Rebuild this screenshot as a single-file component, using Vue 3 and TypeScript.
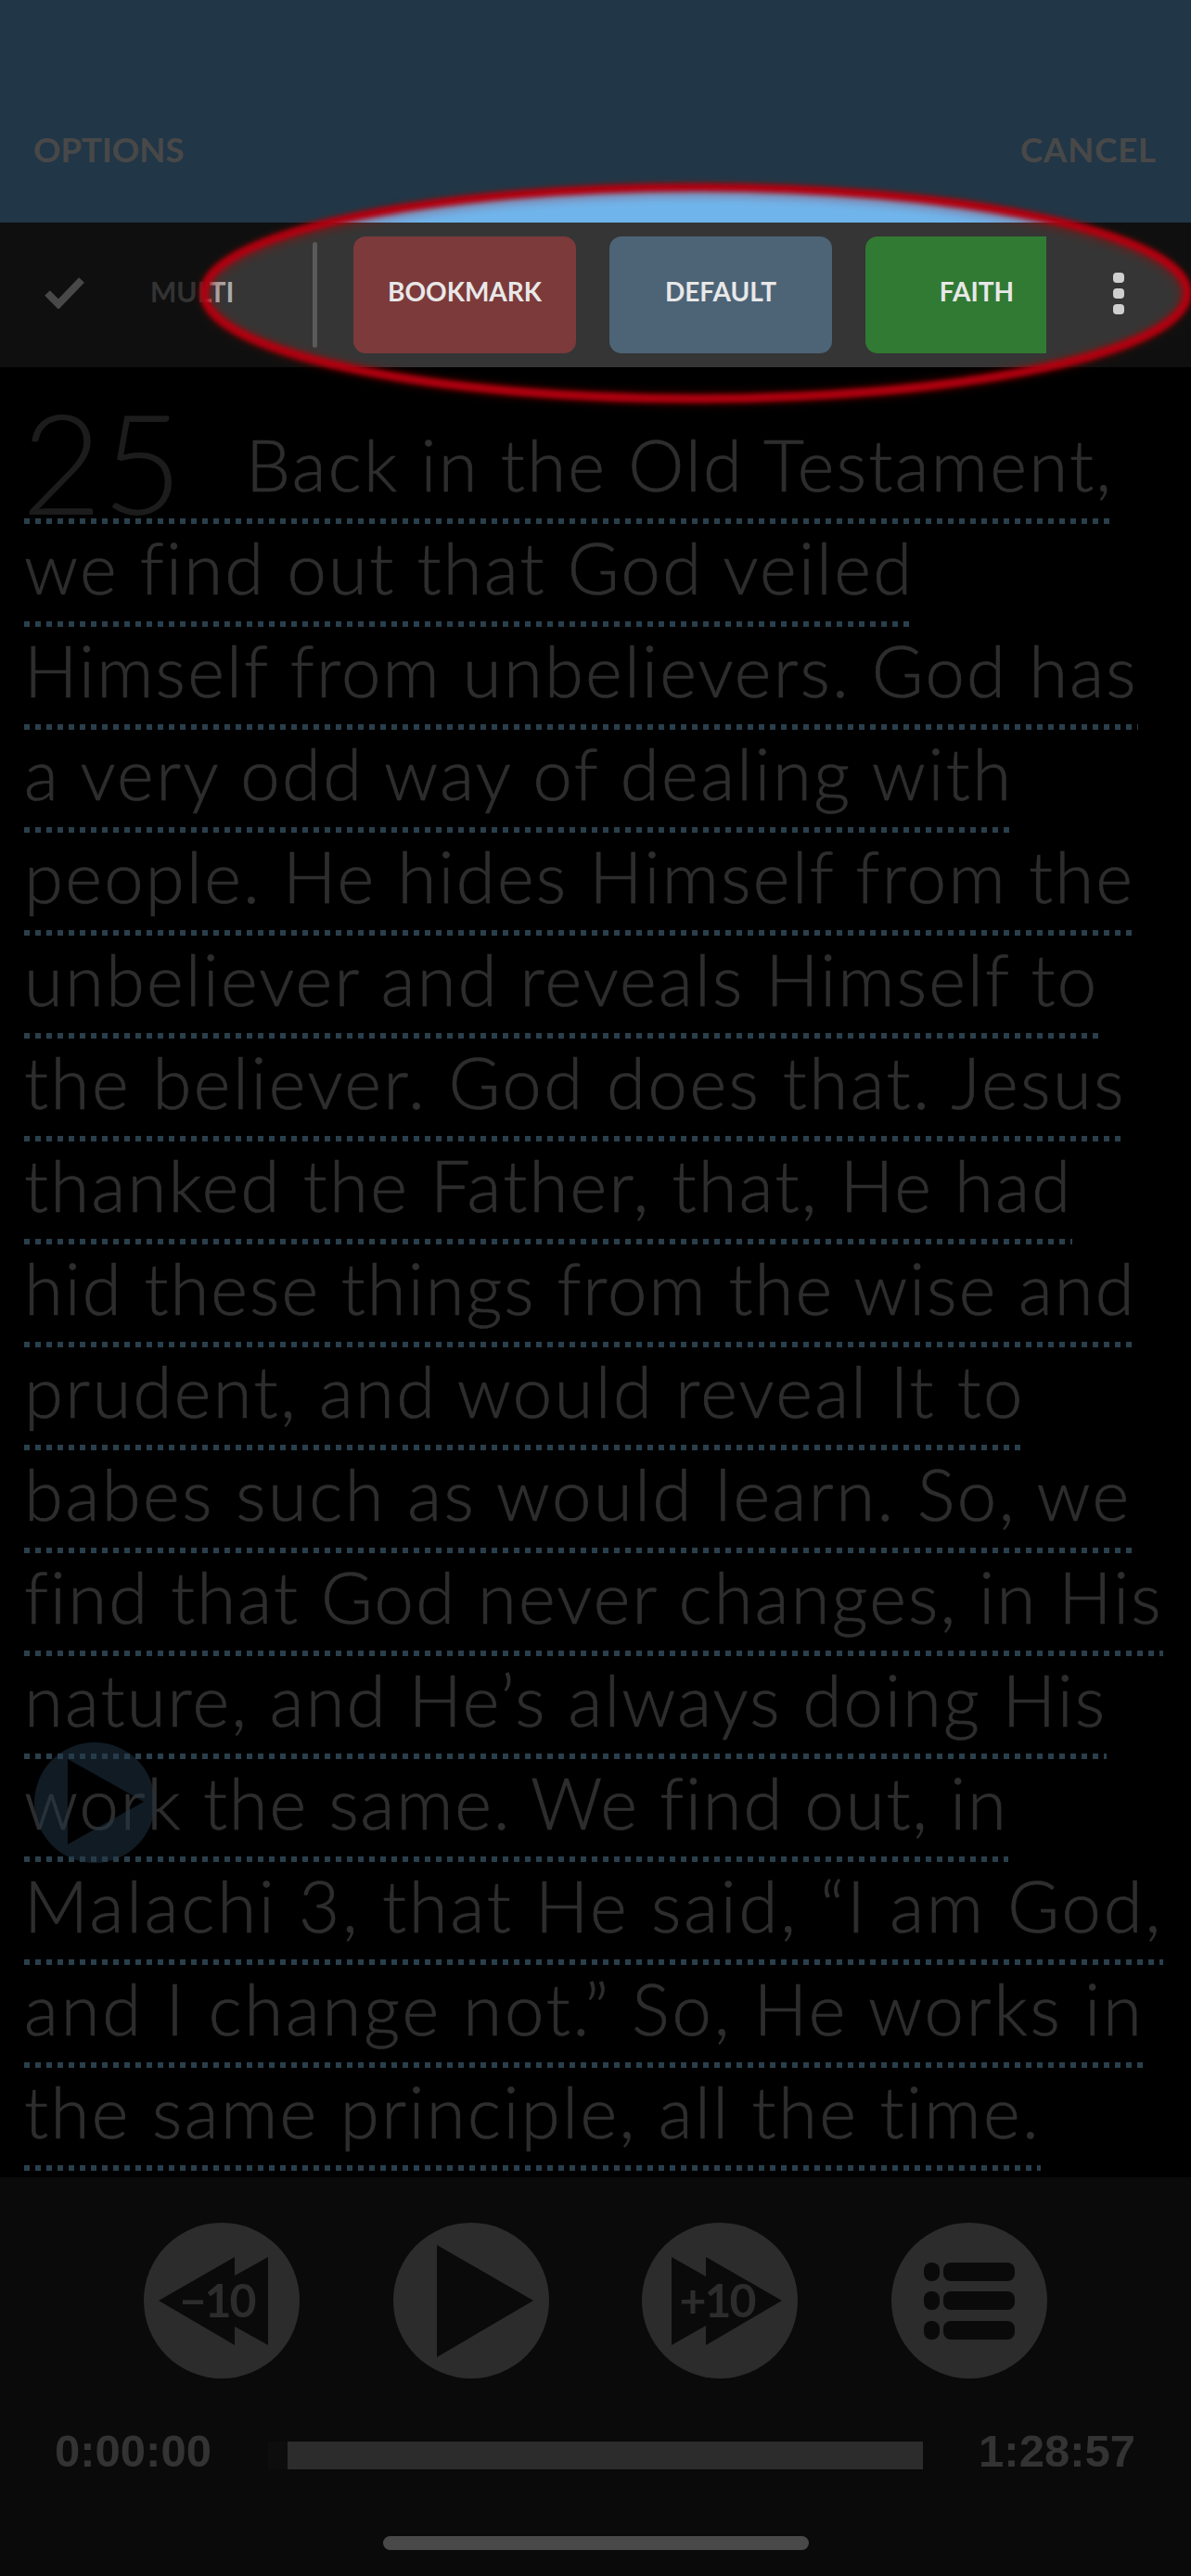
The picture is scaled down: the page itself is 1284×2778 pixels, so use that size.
<script setup lang="ts">
const base = 2.25
const lines: { text: string; fit: number }[] = [
  { text: 'Back in the Old Testament,', fit: 0.08 },
  { text: 'we find out that God veiled', fit: 0.05 },
  { text: 'Himself from unbelievers. God has', fit: 0 },
  { text: 'a very odd way of dealing with', fit: 0.18 },
  { text: 'people. He hides Himself from the', fit: 0.05 },
  { text: 'unbeliever and reveals Himself to', fit: -0.05 },
  { text: 'the believer. God does that. Jesus', fit: 0.32 },
  { text: 'thanked the Father, that, He had', fit: 0.05 },
  { text: 'hid these things from the wise and', fit: -0.2 },
  { text: 'prudent, and would reveal It to', fit: 0.11 },
  { text: 'babes such as would learn. So, we', fit: 0.27 },
  { text: 'find that God never changes, in His', fit: -0.05 },
  { text: 'nature, and He’s always doing His', fit: -0.1 },
  { text: 'work the same. We find out, in', fit: -0.41 },
  { text: 'Malachi 3, that He said, “I am God,', fit: 0.6 },
  { text: 'and I change not.” So, He works in', fit: 0.6 },
  { text: 'the same principle, all the time.', fit: 0.21 },
]
const tags = [
  { name: 'BOOKMARK', cls: 'bookmark' },
  { name: 'DEFAULT', cls: 'default' },
  { name: 'FAITH', cls: 'faith' },
]
</script>

<template>
  <div class="page">
    <header class="top">
      <span class="top-btn">OPTIONS</span>
      <span class="top-btn cancel">CANCEL</span>
    </header>

    <div class="bar">
      <svg class="check" viewBox="0 0 44 34" width="44" height="34">
        <polyline points="4,17 16,29 41,3" fill="none" stroke="#f0f0f0" stroke-width="8" />
      </svg>
      <span class="multi">MULTI</span>
      <span class="divider"></span>
      <div class="tags">
        <button v-for="t in tags" :key="t.name" class="tag" :class="t.cls">{{ t.name }}</button>
      </div>
      <div class="more"><i></i><i></i><i></i></div>
    </div>

    <main class="reader">
      <div v-for="(l, i) in lines" :key="i" class="line" :style="{ letterSpacing: base + l.fit + 'px' }">
        <span v-if="i === 0" class="verse">25</span>{{ l.text }}
      </div>
      <svg class="float-play" viewBox="0 0 130 130" width="130" height="130">
        <path fill="#6fb5ec" fill-opacity="0.5" fill-rule="evenodd"
          d="M0 65a65 65 0 1 0 130 0a65 65 0 1 0 -130 0Z M36 18V110L118 64Z" />
      </svg>
    </main>

    <footer class="player">
      <div class="controls">
        <svg class="ctl" viewBox="0 0 168 168" width="168" height="168">
          <circle cx="84" cy="84" r="84" fill="#939393" />
          <path d="M16 84L98 37V57L134 37V132L98 112V132Z" fill="#222" />
          <text x="79" y="102" text-anchor="middle" class="ctl-text">−10</text>
        </svg>
        <svg class="ctl" viewBox="0 0 168 168" width="168" height="168">
          <circle cx="84" cy="84" r="84" fill="#939393" />
          <path d="M47 24L151 84L47 145Z" fill="#222" />
        </svg>
        <svg class="ctl" viewBox="0 0 168 168" width="168" height="168">
          <circle cx="84" cy="84" r="84" fill="#939393" />
          <path d="M32 37L69 58V37L151 84L69 132V111L32 132Z" fill="#222" />
          <text x="81" y="102" text-anchor="middle" class="ctl-text">+10</text>
        </svg>
        <svg class="ctl" viewBox="0 0 168 168" width="168" height="168">
          <circle cx="84" cy="84" r="84" fill="#939393" />
          <g fill="#222">
            <rect x="35" y="43" width="17" height="20" rx="8" />
            <rect x="56" y="43" width="77" height="20" rx="8" />
            <rect x="35" y="74" width="17" height="20" rx="8" />
            <rect x="56" y="74" width="77" height="20" rx="8" />
            <rect x="35" y="106" width="17" height="20" rx="8" />
            <rect x="56" y="106" width="77" height="20" rx="8" />
          </g>
        </svg>
      </div>
      <div class="timeline">
        <span class="time">0:00:00</span>
        <div class="track"><div class="start"></div><div class="fill"></div></div>
        <span class="time">1:28:57</span>
      </div>
      <div class="home"></div>
    </footer>

    <svg class="coach" viewBox="0 0 1284 2778" width="1284" height="2778">
      <defs>
        <filter id="soft" x="-5%" y="-30%" width="110%" height="160%">
          <feGaussianBlur stdDeviation="2.5" />
        </filter>
        <filter id="glow" x="-5%" y="-30%" width="110%" height="160%">
          <feGaussianBlur stdDeviation="6" />
        </filter>
      </defs>
      <path fill="#000" fill-opacity="0.7" fill-rule="evenodd"
        d="M0 0H1284V2778H0Z M219 316a531 114 0 1 0 1062 0a531 114 0 1 0 -1062 0Z" />
      <ellipse cx="750" cy="318" rx="527" ry="112" fill="none" stroke="#a80010" stroke-opacity="0.45" stroke-width="8" filter="url(#glow)" />
      <ellipse cx="750" cy="316" rx="530" ry="114" fill="none" stroke="#b00010" stroke-width="9" filter="url(#soft)" />
    </svg>
  </div>
</template>

<style scoped>
.page {
  position: relative;
  width: 1284px;
  height: 2778px;
  overflow: hidden;
  display: flex;
  flex-direction: column;
  background: #000;
  font-family: Lato, "Noto Sans", sans-serif;
}
.top {
  height: 240px;
  flex: none;
  box-sizing: border-box;
  background: #6fb5ec;
  display: flex;
  justify-content: space-between;
  align-items: center;
  padding: 82px 37px 0 36px;
}
.top-btn {
  font-size: 36.5px;
  font-weight: 700;
  color: #f2f2f2;
}
.cancel { letter-spacing: 0.9px; }
.bar {
  height: 156px;
  flex: none;
  box-sizing: border-box;
  background: #353535;
  display: flex;
  align-items: center;
  padding-left: 47px;
}
.check { flex: none; margin-top: -4px; }
.multi {
  width: 172px;
  margin-left: 71px;
  box-sizing: border-box;
  flex: none;
  font-size: 30px;
  font-weight: 700;
  color: #aaa;
  margin-top: -8px;
}
.divider {
  flex: none;
  margin-left: 3px;
  width: 5px;
  height: 114px;
  border-radius: 3px;
  background: #5a5a5a;
}
.tags {
  flex: none;
  width: 747px;
  margin-left: 39px;
  overflow: hidden;
  display: flex;
  gap: 36px;
}
.tag {
  flex: none;
  width: 240px;
  height: 126px;
  border: 0;
  border-radius: 13px;
  padding: 0 0 8px;
  font-family: inherit;
  font-size: 28px;
  font-weight: 700;
  color: #e8e8e8;
}
.bookmark { background: #7c3a3b; }
.default { background: #4d6477; }
.faith { background: #317a33; }
.more {
  flex: none;
  margin-left: 72px;
  display: flex;
  flex-direction: column;
  gap: 6px;
  margin-top: -3px;
}
.more i {
  display: block;
  width: 12px;
  height: 11px;
  border-radius: 4px;
  background: #cfcfcf;
}
.reader {
  position: relative;
  flex: 1;
  min-height: 0;
  overflow: hidden;
  box-sizing: border-box;
  padding: 58px 0 0 26px;
  color: #989898;
  font-size: 76px;
  font-weight: 300;
  -webkit-text-stroke: 0.7px #989898;
}
.line {
  width: fit-content;
  height: 111px;
  box-sizing: border-box;
  line-height: 93px;
  white-space: nowrap;
  background-image: linear-gradient(90deg, #8ed4ff 6px, transparent 6px);
  background-size: 12px 6px;
  background-repeat: repeat-x;
  background-position: left bottom;
}
.verse {
  font-size: 150px;
  line-height: 0;
  font-weight: 300;
  letter-spacing: 0;
  color: #606060;
  -webkit-text-stroke: 0;
  vertical-align: -25px;
  margin-left: -3px;
  margin-right: 68px;
}
.float-play {
  position: absolute;
  left: 37px;
  top: 1483px;
}
.player {
  height: 430px;
  flex: none;
  box-sizing: border-box;
  background: #222;
  padding-top: 49px;
  display: flex;
  flex-direction: column;
  align-items: center;
}
.controls {
  display: flex;
  gap: 100.5px;
}
.ctl { flex: none; display: block; }
.ctl-text {
  font-family: Lato, sans-serif;
  font-size: 50px;
  font-weight: 700;
  letter-spacing: -2px;
  fill: #939393;
}
.timeline {
  width: 100%;
  box-sizing: border-box;
  margin-top: 58px;
  display: flex;
  align-items: center;
  padding: 0 60px 0 59px;
}
.time {
  flex: none;
  font-family: "Liberation Sans", Arial, sans-serif;
  font-size: 49px;
  line-height: 40px;
  font-weight: 700;
  color: #aaa;
}
.track {
  flex: 1;
  display: flex;
  height: 30px;
  margin: 10px 0 0 61px;
}
.start {
  width: 21px;
  background: #2e2e2e;
}
.fill {
  width: 685px;
  background: #939393;
}
.home {
  width: 459px;
  height: 15px;
  margin-top: 72px;
  border-radius: 8px;
  background: #f6f6f6;
}
.coach {
  position: absolute;
  left: 0;
  top: 0;
  pointer-events: none;
}
</style>
